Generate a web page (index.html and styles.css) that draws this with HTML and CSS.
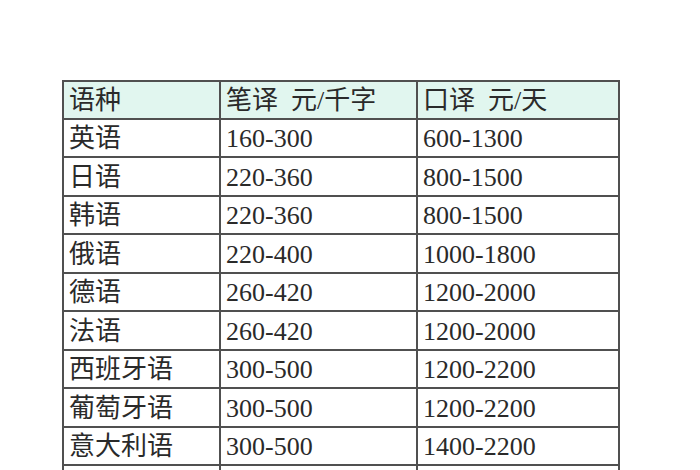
FILE: index.html
```html
<!DOCTYPE html>
<html lang="zh">
<head>
<meta charset="utf-8">
<link rel="stylesheet" href="styles.css">
</head>
<body>
<div class="page">
<table class="price">
<colgroup><col class="c1"><col class="c2"><col class="c3"></colgroup>
<thead>
<tr><th>语种</th><th>笔译&nbsp; 元/千字</th><th>口译&nbsp; 元/天</th></tr>
</thead>
<tbody>
<tr><td>英语</td><td>160-300</td><td>600-1300</td></tr>
<tr><td>日语</td><td>220-360</td><td>800-1500</td></tr>
<tr><td>韩语</td><td>220-360</td><td>800-1500</td></tr>
<tr><td>俄语</td><td>220-400</td><td>1000-1800</td></tr>
<tr><td>德语</td><td>260-420</td><td>1200-2000</td></tr>
<tr><td>法语</td><td>260-420</td><td>1200-2000</td></tr>
<tr><td>西班牙语</td><td>300-500</td><td>1200-2200</td></tr>
<tr><td>葡萄牙语</td><td>300-500</td><td>1200-2200</td></tr>
<tr><td>意大利语</td><td>300-500</td><td>1400-2200</td></tr>
<tr><td>&nbsp;</td><td>&nbsp;</td><td>&nbsp;</td></tr>
</tbody>
</table>
</div>
</body>
</html>
```
FILE: styles.css
```css
html, body {
  margin: 0;
  padding: 0;
  background: #ffffff;
  overflow: hidden;
  height: 470px;
}
.page {
  padding: 80px 0 0 62px;
}
.price {
  border-collapse: collapse;
  table-layout: fixed;
  width: 556px;
  font-family: "Liberation Serif", "Noto Sans CJK SC", serif;
  font-size: 26px;
  color: #2a2a2a;
}
.c1 { width: 157px; }
.c2 { width: 197px; }
.c3 { width: 202px; }
.price th, .price td {
  border: 2px solid #505050;
  height: 38.5px;
  padding: 3px 0 0 5px;
  box-sizing: border-box;
  text-align: left;
  font-weight: normal;
  white-space: nowrap;
  line-height: 1;
  vertical-align: middle;
}
.price thead th {
  height: 37.5px;
  background: #e1f6ef;
}
```
